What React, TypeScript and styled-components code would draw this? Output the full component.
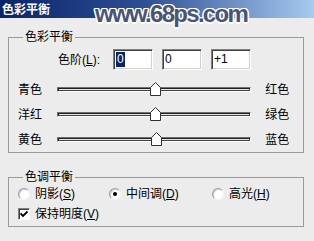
import React from 'react';
import styled, { createGlobalStyle } from 'styled-components';

const Global = createGlobalStyle`
  html, body { margin: 0; padding: 0; }
  body {
    width: 314px; height: 241px; overflow: hidden;
    background: #ececec;
    font-family: "Liberation Sans", "Noto Sans CJK SC", sans-serif;
    font-size: 12px; color: #000;
  }
`;

const Window = styled.div`
  position: relative;
  width: 314px;
  height: 241px;
  background: #ececec;
  overflow: hidden;
`;

const TitleBar = styled.div`
  height: 18px;
  display: flex;
  align-items: center;
  padding-left: 2px;
  background: linear-gradient(to right, #0a246a 0%, #2d4d92 45%, #a6caf0 100%);
  color: #fff;
  font-family: "Noto Sans CJK SC", sans-serif;
  font-weight: bold;
  font-size: 12px;
  line-height: 18px;
`;

const Watermark = styled.div`
  position: absolute;
  left: 95px;
  top: -1px;
  font-family: "Liberation Sans", sans-serif;
  font-weight: bold;
  font-size: 24px;
  letter-spacing: -1.7px;
  line-height: 30px;
  color: #4a5574;
  text-shadow:
    1.5px 0 0 #fff, -1.5px 0 0 #fff, 0 1.5px 0 #fff, 0 -1.5px 0 #fff,
    1px 1px 0 #fff, -1px -1px 0 #fff, 1px -1px 0 #fff, -1px 1px 0 #fff,
    0 0 2px #8890a8;
`;

const Body = styled.div`
  padding: 12px 10px 0 8px;
  display: flex;
  flex-direction: column;
  gap: 17px;
`;

const Group = styled.fieldset<{ $pt: number; $pb: number }>`
  margin: 0;
  min-inline-size: 0;
  padding: ${(p) => p.$pt}px 8px ${(p) => p.$pb}px 9px;
  border: 1px solid #9a9a9a;
  display: flex;
  flex-direction: column;
`;

const Legend = styled.legend`
  margin-left: 5px;
  padding: 0 2px;
  line-height: 14px;
  font-size: 12px;
`;

const LevelsRow = styled.div`
  display: flex;
  align-items: center;
  height: 21px;
  margin-left: 40px;
  margin-bottom: 7px;
`;

const LevelsLabel = styled.span`
  width: 55px;
  line-height: 14px;
`;

const Fields = styled.div`
  display: flex;
  gap: 9px;
`;

const Field = styled.div`
  box-sizing: border-box;
  width: 40px;
  height: 21px;
  background: #fff;
  border-style: solid;
  border-width: 1px;
  border-color: #808080 #ffffff #ffffff #808080;
  box-shadow: inset 1px 1px 0 #404040, inset -1px -1px 0 #d4d0c8;
  padding: 2px 2px;
  font-size: 12px;
  line-height: 15px;
  display: flex;
  align-items: center;
`;

const Sel = styled.span`
  background: #0a246a;
  color: #fff;
  padding: 0 1px;
`;

const SliderRow = styled.div`
  display: flex;
  align-items: center;
  height: 25px;
`;

const SideLabel = styled.span<{ $w?: number }>`
  width: ${(p) => p.$w ?? 39}px;
  line-height: 14px;
`;

const TrackWrap = styled.div`
  position: relative;
  width: 197px;
  height: 14px;
  margin-right: 14px;
  display: flex;
  align-items: center;
`;

const Track = styled.div`
  box-sizing: border-box;
  width: 100%;
  height: 5px;
  background: #e8e8e8;
  border-style: solid;
  border-width: 1px;
  border-color: #707070 #ffffff #ffffff #707070;
  box-shadow: inset 1px 1px 0 #202020, inset -1px -1px 0 #404040;
`;

const Thumb = styled.svg`
  position: absolute;
  top: -1px;
`;

const OptionsRow = styled.div`
  display: grid;
  grid-template-columns: 91px 103px auto;
  height: 16px;
  align-items: center;
  margin-bottom: 4px;
`;

const Option = styled.label`
  display: flex;
  align-items: center;
  gap: 5px;
  line-height: 14px;
`;

const OptionText = styled.span`
  white-space: nowrap;
`;

const Radio = styled.span<{ $on?: boolean }>`
  box-sizing: border-box;
  width: 12px;
  height: 12px;
  border-radius: 50%;
  background: #fff;
  border: 1px solid;
  border-color: #9a9a9a #f4f4f4 #f4f4f4 #9a9a9a;
  box-shadow: inset 1px 1px 0 #d0d0d0;
  display: flex;
  align-items: center;
  justify-content: center;
  &::after {
    content: "";
    width: 4px;
    height: 4px;
    border-radius: 50%;
    background: ${(p) => (p.$on ? '#000' : 'transparent')};
  }
`;

const CheckRow = styled.div`
  height: 16px;
  display: flex;
  align-items: center;
`;

const Check = styled.span`
  box-sizing: border-box;
  width: 12px;
  height: 12px;
  background: #fff;
  border: 1px solid;
  border-color: #808080 #ffffff #ffffff #808080;
  box-shadow: inset 1px 1px 0 #404040;
  display: flex;
  align-items: center;
  justify-content: center;
`;

const sliders = [
  { left: '青色', right: '红色', value: 0 },
  { left: '洋红', right: '绿色', value: 0 },
  { left: '黄色', right: '蓝色', value: 1 },
];

const TRACK_W = 197;

export default function App() {
  return (
    <Window>
      <Global />
      <TitleBar>色彩平衡</TitleBar>
      <Watermark>www.68ps.com</Watermark>
      <Body>
        <Group $pt={5} $pb={0}>
          <Legend>色彩平衡</Legend>
          <LevelsRow>
            <LevelsLabel>
              色阶(<u>L</u>):
            </LevelsLabel>
            <Fields>
              <Field>
                <Sel>0</Sel>
              </Field>
              <Field>0</Field>
              <Field>+1</Field>
            </Fields>
          </LevelsRow>
          {sliders.map((s) => {
            const left = Math.round(((s.value + 100) / 200) * TRACK_W - 5.5);
            return (
              <SliderRow key={s.left}>
                <SideLabel>{s.left}</SideLabel>
                <TrackWrap>
                  <Track />
                  <Thumb width="11" height="14" viewBox="0 0 11 14" style={{ left }}>
                    <polygon points="5.5,0.5 10.5,5.5 10.5,13.5 0.5,13.5 0.5,5.5" fill="#fff" stroke="#303030" strokeWidth="1" />
                  </Thumb>
                </TrackWrap>
                <SideLabel $w={30}>{s.right}</SideLabel>
              </SliderRow>
            );
          })}
        </Group>
        <Group $pt={2} $pb={4}>
          <Legend>色调平衡</Legend>
          <OptionsRow>
            <Option>
              <Radio />
              <OptionText>
                阴影(<u>S</u>)
              </OptionText>
            </Option>
            <Option>
              <Radio $on />
              <OptionText>
                中间调(<u>D</u>)
              </OptionText>
            </Option>
            <Option>
              <Radio />
              <OptionText>
                高光(<u>H</u>)
              </OptionText>
            </Option>
          </OptionsRow>
          <CheckRow>
            <Option>
              <Check>
                <svg width="8" height="8" viewBox="0 0 8 8">
                  <polyline points="0.5,3.5 3,6 7.5,1.5" fill="none" stroke="#000" strokeWidth="1.8" />
                </svg>
              </Check>
              <OptionText>
                保持明度(<u>V</u>)
              </OptionText>
            </Option>
          </CheckRow>
        </Group>
      </Body>
    </Window>
  );
}
